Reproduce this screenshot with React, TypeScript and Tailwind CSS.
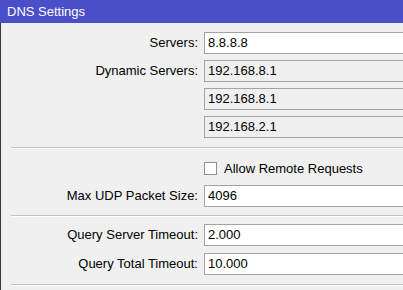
import React from 'react';

const font = { fontFamily: '"Liberation Sans", Arial, sans-serif' };

function Field({ value, readOnly }: { value: string; readOnly?: boolean }) {
  return (
    <div
      className={`h-[22px] w-[230px] shrink-0 border border-[#a3a3a3] pl-[3px] text-[13px] leading-[20px] text-black ${
        readOnly ? 'bg-[#f0f0f0]' : 'bg-white'
      }`}
    >
      {value}
    </div>
  );
}

function Row({ label, children, className = '' }: { label?: string; children: React.ReactNode; className?: string }) {
  return (
    <div className={`flex items-center ${className}`}>
      <div className="w-[197px] shrink-0 pr-0 text-right text-[13px] text-black">{label}</div>
      <div className="ml-[6px] flex items-center">{children}</div>
    </div>
  );
}

function Separator({ className = '' }: { className?: string }) {
  return <div className={`ml-[10px] h-[2px] border-t border-[#c4c4c4] border-b border-b-white ${className}`} />;
}

export default function App() {
  return (
    <div className="h-[290px] w-[403px] overflow-hidden bg-[#f0f0f0]" style={font}>
      <div className="h-[23px] bg-[#4a4ec8] pl-[7px] text-[13px] leading-[23px] text-white">DNS Settings</div>
      <div className="h-[267px] border-l border-[#3a3a3a]">
        <Row label="Servers:" className="pt-[9px]">
          <Field value="8.8.8.8" />
        </Row>
        <Row label="Dynamic Servers:" className="mt-[6px]">
          <Field value="192.168.8.1" readOnly />
        </Row>
        <Row className="mt-[6px]">
          <Field value="192.168.8.1" readOnly />
        </Row>
        <Row className="mt-[6px]">
          <Field value="192.168.2.1" readOnly />
        </Row>
        <Separator className="mt-[9px]" />
        <Row className="mt-[12px] h-[15px]">
          <div className="h-[13px] w-[13px] border border-[#8f8f8f] bg-white" />
          <span className="ml-[7px] text-[13px] text-black">Allow Remote Requests</span>
        </Row>
        <Row label="Max UDP Packet Size:" className="mt-[9px]">
          <Field value="4096" />
        </Row>
        <Separator className="mt-[8px]" />
        <Row label="Query Server Timeout:" className="mt-[7px]">
          <Field value="2.000" />
        </Row>
        <Row label="Query Total Timeout:" className="mt-[7px]">
          <Field value="10.000" />
        </Row>
        <Separator className="mt-[9px]" />
      </div>
    </div>
  );
}
